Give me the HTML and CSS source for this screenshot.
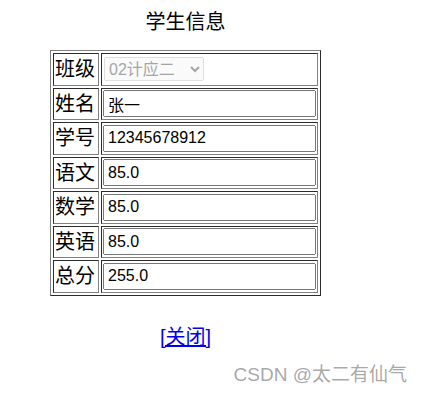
FILE: index.html
```html
<!DOCTYPE html>
<html>

<head>
    <meta charset="utf-8">
    <title>学生信息</title>
    <link rel="stylesheet" href="styles.css">
</head>

<body>
    <div class="page">
        <h3 class="title">学生信息</h3>
        <table class="info" border="1">
            <tr>
                <td class="label">班级</td>
                <td>
                    <select class="cls" disabled>
                        <option>02计应二</option>
                    </select>
                </td>
            </tr>
            <tr>
                <td class="label">姓名</td>
                <td><input type="text" value="张一"></td>
            </tr>
            <tr>
                <td class="label">学号</td>
                <td><input type="text" value="12345678912"></td>
            </tr>
            <tr>
                <td class="label">语文</td>
                <td><input type="text" value="85.0"></td>
            </tr>
            <tr>
                <td class="label">数学</td>
                <td><input type="text" value="85.0"></td>
            </tr>
            <tr>
                <td class="label">英语</td>
                <td><input type="text" value="85.0"></td>
            </tr>
            <tr>
                <td class="label">总分</td>
                <td><input type="text" value="255.0"></td>
            </tr>
        </table>
        <p class="close"><a href="#">[关闭]</a></p>
    </div>
    <div class="mark">CSDN @太二有仙气</div>
</body>
</html>
```

FILE: styles.css
```css
body{
    margin: 8px;
    font-family: "Liberation Sans", "Noto Sans CJK SC", sans-serif;
    color: #000;
}
.page{
    width: 355px;
    text-align: center;
}
.title{
    margin: 0;
    font-size: 20px;
    font-weight: normal;
    line-height: 29px;
}
.info{
    margin: 13px auto 0 auto;
    text-align: left;
}
.info td{
    padding: 1px;
}
.info .label{
    font-size: 20px;
    line-height: 28.5px;
    width: 42px;
}
.info input{
    width: 213px;
    height: 27px;
    box-sizing: border-box;
    font-size: 16px;
    font-family: "Liberation Sans", "Noto Sans CJK SC", sans-serif;
    padding: 0 3px;
    margin: 0;
    display: block;
}
.info .cls{
    width: 100px;
    height: 24px;
    font-size: 16px;
    font-family: "Liberation Sans", "Noto Sans CJK SC", sans-serif;
    margin: 2px 0 2px 1px;
    display: block;
}
.close{
    margin: 27px 0 0 0;
    font-size: 20px;
    line-height: 29px;
}
.close a{
    color: #0000ee;
}
.mark{
    position: absolute;
    right: 16px;
    bottom: 8px;
    font-size: 19px;
    color: rgba(130, 130, 130, .7);
}
```
